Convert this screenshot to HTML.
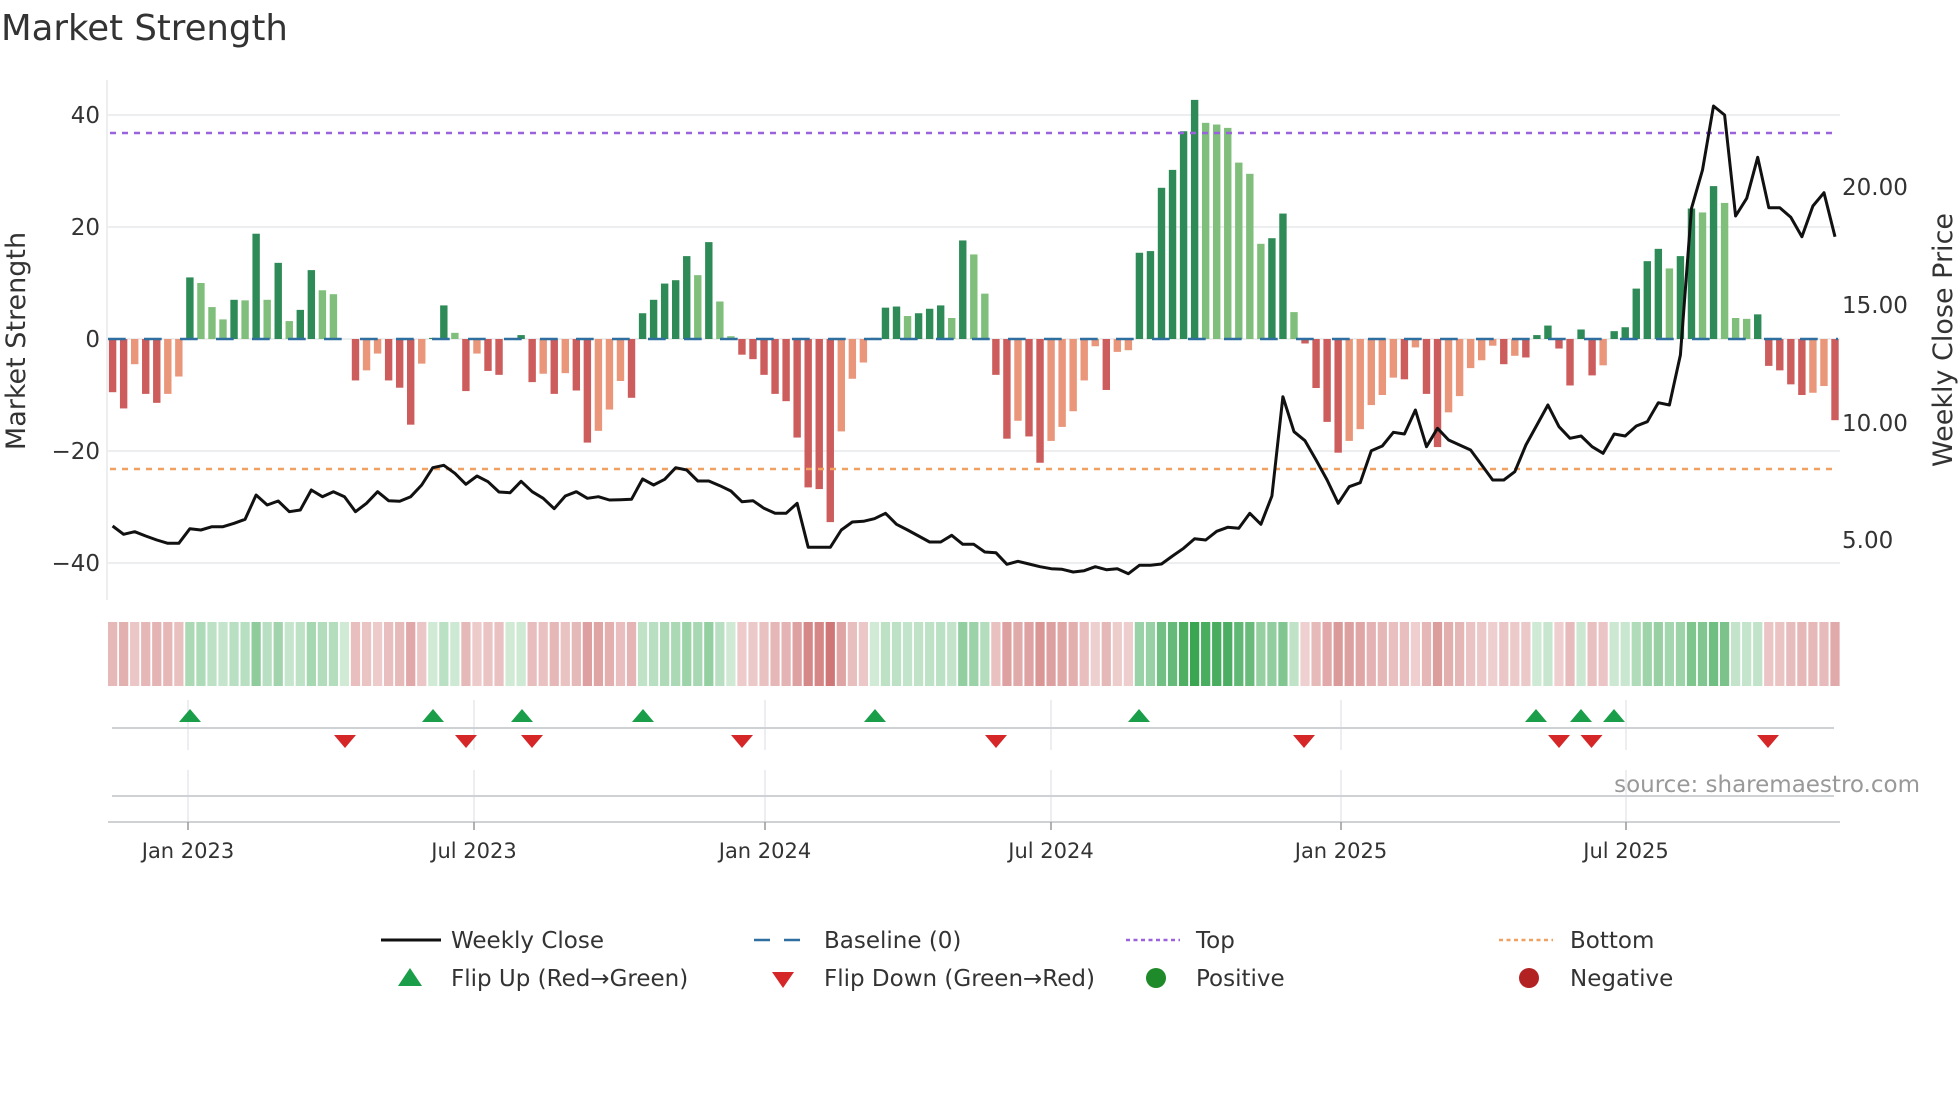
<!DOCTYPE html>
<html><head><meta charset="utf-8"><style>
html,body{margin:0;padding:0;background:#fff;width:1960px;height:1102px;overflow:hidden}
svg text{font-family:"DejaVu Sans","Liberation Sans",sans-serif;fill:#333}
</style></head><body>
<svg id="c" width="1960" height="1102" viewBox="0 0 1960 1102" xmlns="http://www.w3.org/2000/svg">
<text x="1" y="40" font-size="35.5">Market Strength</text>
<g stroke="#eceef0" stroke-width="2">
<line x1="107" y1="115" x2="1840" y2="115"/><line x1="107" y1="227" x2="1840" y2="227"/>
<line x1="107" y1="339" x2="1840" y2="339"/><line x1="107" y1="451" x2="1840" y2="451"/>
<line x1="107" y1="563" x2="1840" y2="563"/>
<line x1="107" y1="80" x2="107" y2="600"/>
</g>
<g font-size="23" text-anchor="end">
<text x="100" y="123">40</text><text x="100" y="235">20</text><text x="100" y="347">0</text>
<text x="100" y="459">−20</text><text x="100" y="571">−40</text>
</g>
<g font-size="23">
<text x="1842" y="195">20.00</text><text x="1842" y="313">15.00</text>
<text x="1842" y="431">10.00</text><text x="1842" y="548">5.00</text>
</g>
<text font-size="27" transform="translate(25,341) rotate(-90)" text-anchor="middle">Market Strength</text>
<text font-size="27" transform="translate(1952,340) rotate(-90)" text-anchor="middle">Weekly Close Price</text>
<g id="bars"></g>
<line x1="108" y1="339" x2="1838" y2="339" stroke="#2f6f9f" stroke-width="2.5" stroke-dasharray="17.7 18.3"/>
<line x1="110" y1="133" x2="1836" y2="133" stroke="#9a62dc" stroke-width="2.4" stroke-dasharray="6 6"/>
<line x1="110" y1="469" x2="1836" y2="469" stroke="#f0a060" stroke-width="2.4" stroke-dasharray="6 6"/>
<polyline id="price" fill="none" stroke="#111" stroke-width="3" stroke-linejoin="round"/>
<g id="strip"></g>
<g stroke="#e6e9ec" stroke-width="1.5">
<line x1="188" y1="700" x2="188" y2="750"/><line x1="474" y1="700" x2="474" y2="750"/><line x1="765" y1="700" x2="765" y2="750"/>
<line x1="1051" y1="700" x2="1051" y2="750"/><line x1="1341" y1="700" x2="1341" y2="750"/><line x1="1626" y1="700" x2="1626" y2="750"/>
<line x1="188" y1="770" x2="188" y2="822"/><line x1="474" y1="770" x2="474" y2="822"/><line x1="765" y1="770" x2="765" y2="822"/>
<line x1="1051" y1="770" x2="1051" y2="822"/><line x1="1341" y1="770" x2="1341" y2="822"/><line x1="1626" y1="770" x2="1626" y2="822"/>
</g>
<g stroke="#cfd2d5" stroke-width="2">
<line x1="112" y1="728" x2="1834" y2="728"/><line x1="112" y1="796" x2="1834" y2="796"/>
<line x1="108" y1="822" x2="1840" y2="822"/>
</g>
<g stroke="#999" stroke-width="1.5">
<line x1="188" y1="822" x2="188" y2="830"/><line x1="474" y1="822" x2="474" y2="830"/><line x1="765" y1="822" x2="765" y2="830"/>
<line x1="1051" y1="822" x2="1051" y2="830"/><line x1="1341" y1="822" x2="1341" y2="830"/><line x1="1626" y1="822" x2="1626" y2="830"/>
</g>
<g id="marks"></g>
<g font-size="21" text-anchor="middle">
<text x="188" y="858">Jan 2023</text><text x="474" y="858">Jul 2023</text><text x="765" y="858">Jan 2024</text>
<text x="1051" y="858">Jul 2024</text><text x="1341" y="858">Jan 2025</text><text x="1626" y="858">Jul 2025</text>
</g>
<text x="1920" y="792" font-size="23" text-anchor="end" style="fill:#999">source: sharemaestro.com</text>
<g font-size="23">
<line x1="381" y1="940" x2="441" y2="940" stroke="#111" stroke-width="3"/>
<text x="451" y="948">Weekly Close</text>
<line x1="754" y1="940" x2="808" y2="940" stroke="#2f6f9f" stroke-width="2.5" stroke-dasharray="16 14"/>
<text x="824" y="948">Baseline (0)</text>
<line x1="1126" y1="940" x2="1180" y2="940" stroke="#9a62dc" stroke-width="2.4" stroke-dasharray="4 3.5"/>
<text x="1196" y="948">Top</text>
<line x1="1499" y1="940" x2="1553" y2="940" stroke="#f0a060" stroke-width="2.4" stroke-dasharray="4 3.5"/>
<text x="1570" y="948">Bottom</text>
<polygon points="410,968 398,986 422,986" fill="#1a9e4a"/>
<text x="451" y="986">Flip Up (Red→Green)</text>
<polygon points="772,972 794,972 783,988" fill="#d62728"/>
<text x="824" y="986">Flip Down (Green→Red)</text>
<circle cx="1156" cy="978" r="10" fill="#1f8a2a"/>
<text x="1196" y="986">Positive</text>
<circle cx="1529" cy="978" r="10" fill="#b22222"/>
<text x="1570" y="986">Negative</text>
</g>
</svg>
<script>
var V=[-9.5,-12.4,-4.5,-9.8,-11.4,-9.8,-6.7,11,10,5.7,3.5,7,6.9,18.8,7,13.6,3.2,5.2,12.3,8.7,8,0,-7.4,-5.6,-2.6,-7.4,-8.7,-15.3,-4.4,0.2,6,1.1,-9.3,-2.6,-5.7,-6.4,0,0.7,-7.7,-6.2,-9.8,-6.1,-9.2,-18.5,-16.4,-12.6,-7.5,-10.5,4.6,7,9.9,10.5,14.8,11.4,17.3,6.7,0.5,-2.8,-3.6,
-6.4,-9.8,-11.1,-17.6,-26.5,-26.8,-32.7,-16.5,-7.1,-4.2,0.2,5.6,5.8,4.1,4.6,5.4,6,3.75,17.6,15.1,8.1,-6.4,-17.8,-14.6,-17.4,-22.1,-18.2,-15.7,-12.9,-7.4,-1.3,-9.1,-2.3,-2,15.4,15.7,27,30.2,37.1,42.7,38.6,38.3,37.7,31.5,29.5,17,18,22.4,4.8,-0.8,-8.75,-14.8,-20.3,-18.2,-16.1,-11.8,-10,-6.9,-7.2,-1.5,
-9.8,-19.3,-13.1,-10.2,-5.2,-3.8,-1.2,-4.5,-3,-3.3,0.7,2.4,-1.7,-8.3,1.7,-6.5,-4.7,1.4,2.1,9,13.9,16.1,12.6,14.8,23.3,22.6,27.3,24.3,3.75,3.6,4.4,-4.8,-5.6,-8.1,-10,-9.6,-8.4,-14.5];
var F="DDLDDLL"+"DLLLDLDLDLDDLL"+"D"+"DLLDDDL"+"DDL"+"DLDD"+"DD"+"DLDLDDLLLD"+"DDDDDLDLL"+"DD"+
"DDDDDDDLLL"+"DDDLDDDL"+"DLL"+"DDLDDLLLLLDLL"+"DDDDDDLLLLLLDD"+"L"+"DDDDLLLLLDL"+
"DDLLLLLDLD"+"DDDDDDLDDD"+"DDLDDLDLLL"+"DDDDDLLD";
var P=[1338,1363,1355,1368,1380,1390,1390,1346,1350,1340,1340,1330,1318,1245,1275,1263,1295,1290,1230,1250,1235,1250,1295,1270,1235,1262,1264,1250,1215,1163,1156,1180,1213,1188,1205,1236,1238,1204,1235,1255,1286,1248,1235,1255,1250,1260,1259,1258,1197,1215,1198,1163,1170,1203,1203,1217,1233,1265,1262,
1285,1300,1300,1270,1402,1402,1402,1350,1326,1324,1316,1300,1333,1350,1368,1386,1386,1366,1393,1393,1416,1418,1453,1444,1452,1460,1466,1468,1476,1472,1460,1469,1466,1481,1456,1456,1452,1428,1405,1376,1380,1354,1342,1345,1300,1333,1248,950,1055,1082,1140,1200,1270,1220,1208,1112,1098,1057,1062,990,
1100,1045,1080,1095,1110,1155,1200,1200,1175,1095,1035,975,1040,1075,1068,1100,1120,1062,1068,1038,1025,968,975,825,385,270,78,105,408,355,232,383,383,412,470,378,338,470];
var NS="http://www.w3.org/2000/svg";
function el(t,a,p){var e=document.createElementNS(NS,t);for(var k in a)e.setAttribute(k,a[k]);p.appendChild(e);return e;}
function mix(c,t){return "rgb("+c.map(function(v){return Math.round(255+(v-255)*t)}).join(",")+")";}
var bars=document.getElementById("bars"),strip=document.getElementById("strip"),pts=[];
var N=V.length,pitch=(1835-112.6)/(N-1);
for(var i=0;i<N;i++){
 var x=112.6+i*pitch,v=V[i],d=F[i]=="D";
 var h=Math.abs(v)*5.6,y=v>=0?339-h:339;
 var col=v>=0?(d?"#2e8b57":"#7fbf7b"):(d?"#cd5c5c":"#e9967a");
 if(h>0.3)el("rect",{x:x-3.7,y:y,width:7.4,height:h,fill:col},bars);
 var t,c;
 if(v>=0){t=0.22+0.72*Math.min(v/43,1);c=[44,160,70];}
 else{t=0.24+0.5*Math.min(-v/33,1);c=[190,70,70];}
 el("rect",{x:x-pitch/2+0.9,y:622,width:pitch-1.8,height:64,fill:mix(c,t)},strip);
 pts.push(x.toFixed(1)+","+(80+(P[i]||P[P.length-1])/3).toFixed(1));
}
document.getElementById("price").setAttribute("points",pts.join(" "));
var marks=document.getElementById("marks");
[190,433,522,643,875,1139,1536,1581,1614].forEach(function(x){el("polygon",{points:(x)+",709 "+(x-11)+",722 "+(x+11)+",722",fill:"#1a9e4a"},marks);});
[345,466,532,742,996,1304,1559,1591.5,1768].forEach(function(x){el("polygon",{points:(x-11)+",735 "+(x+11)+",735 "+x+",748",fill:"#d62728"},marks);});
</script>
</body></html>
